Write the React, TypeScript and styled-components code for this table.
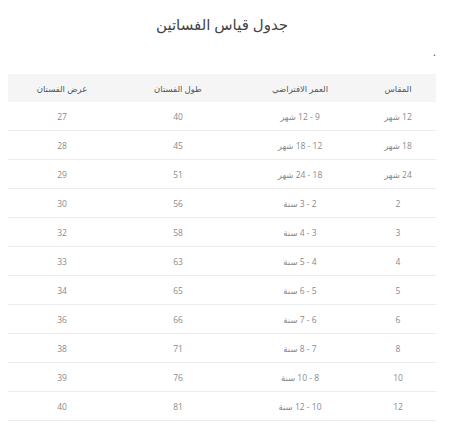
import React from 'react';
import styled, {createGlobalStyle} from 'styled-components';

const Global = createGlobalStyle`
  body {
    margin: 8px;
    background: #fff;
    font-family: "Open Sans", "DejaVu Sans", sans-serif;
  }
`;

type RowType = {
    size: string
    age: string
    length: number
    width: number
}

const rows: RowType[] = [
    {size: '12 شهر', age: '9 - 12 شهر', length: 40, width: 27},
    {size: '18 شهر', age: '12 - 18 شهر', length: 45, width: 28},
    {size: '24 شهر', age: '18 - 24 شهر', length: 51, width: 29},
    {size: '2', age: '2 - 3 سنة', length: 56, width: 30},
    {size: '3', age: '3 - 4 سنة', length: 58, width: 32},
    {size: '4', age: '4 - 5 سنة', length: 63, width: 33},
    {size: '5', age: '5 - 6 سنة', length: 65, width: 34},
    {size: '6', age: '6 - 7 سنة', length: 66, width: 36},
    {size: '8', age: '7 - 8 سنة', length: 71, width: 38},
    {size: '10', age: '8 - 10 سنة', length: 76, width: 39},
    {size: '12', age: '10 - 12 سنة', length: 81, width: 40},
];

export default function App() {
    return (
        <>
            <Global/>
            <Wrapper dir="rtl">
                <Title>جدول قياس الفساتين</Title>
                <Dot>.</Dot>
                <Table>
                    <colgroup>
                        <col style={{width: '76px'}}/>
                        <col style={{width: '120px'}}/>
                        <col style={{width: '124px'}}/>
                        <col style={{width: '108px'}}/>
                    </colgroup>
                    <thead>
                    <tr>
                        <Th>المقاس</Th>
                        <Th>العمر الافتراضي</Th>
                        <Th>طول الفستان</Th>
                        <Th>عرض الفستان</Th>
                    </tr>
                    </thead>
                    <tbody>
                    {rows.map(r => (
                        <tr key={r.size}>
                            <Td>{r.size}</Td>
                            <Td>{r.age}</Td>
                            <Td>{r.length}</Td>
                            <Td>{r.width}</Td>
                        </tr>
                    ))}
                    </tbody>
                </Table>
            </Wrapper>
        </>
    );
}

const Wrapper = styled.div`
  width: 428px;
`;

const Title = styled.h2`
  margin: 4px 0 0;
  text-align: center;
  font-size: 15px;
  line-height: 24px;
  font-weight: 400;
  color: #444;
`;

const Dot = styled.p`
  margin: 6px 0 0;
  font-size: 11px;
  line-height: 20px;
  color: #444;
`;

const Table = styled.table`
  margin-top: 12px;
  width: 100%;
  border-collapse: collapse;
  table-layout: fixed;
`;

const Th = styled.th`
  height: 28px;
  padding: 0;
  background: #f5f5f5;
  font-size: 8.5px;
  font-weight: 400;
  color: #555;
  text-align: center;
`;

const Td = styled.td`
  height: 28px;
  padding: 0;
  border-bottom: 1px solid #ececec;
  font-size: 8.5px;
  color: #8a8a8a;
  text-align: center;
`;
